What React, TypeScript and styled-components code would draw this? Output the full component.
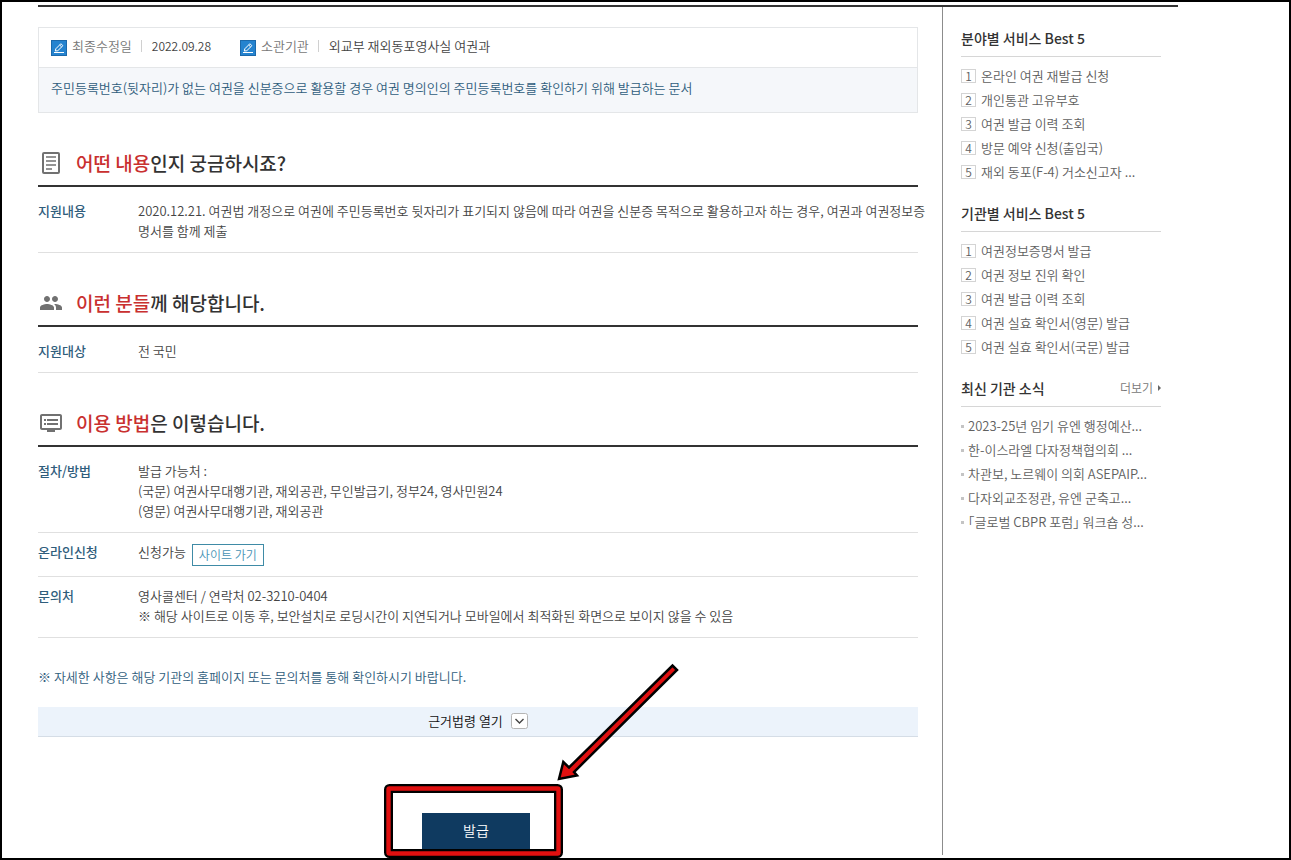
import React from "react";
import styled, { createGlobalStyle } from "styled-components";
import { MdDvr, MdPeople } from "react-icons/md";

const GlobalStyle = createGlobalStyle`
  *, *::before, *::after { box-sizing: border-box; }
  body {
    margin: 0;
    background: #fff;
    color: #444;
    font-family: "Noto Sans CJK KR", "Noto Sans", sans-serif;
    font-size: 13px;
    font-weight: 350;
    line-height: 20px;
  }
  h2, h3, p, ul, ol, dl, dd { margin: 0; padding: 0; }
  ul, ol { list-style: none; }
  a { color: inherit; text-decoration: none; }
  button { font: inherit; cursor: pointer; }
`;

const Page = styled.div`
  min-height: 100vh;
  display: flex;
  flex-direction: column;
  border: 2px solid #000;
  padding: 3px 36px 0;
`;

const Container = styled.div`
  flex: 1;
  display: flex;
  max-width: 1140px;
  border-top: 2px solid #333;
`;

const Main = styled.main`
  flex: 1;
  min-width: 0;
  padding: 20px 24px 9px 0;
`;

const MetaBox = styled.div`
  border: 1px solid #e4e6e8;
`;

const MetaRow = styled.div`
  display: flex;
  align-items: center;
  gap: 29px;
  height: 39px;
  padding: 0 12px;
`;

const MetaItem = styled.div`
  display: flex;
  align-items: center;
  gap: 5px;
`;

const MetaLabel = styled.span`
  padding-bottom: 3px;
  color: #777;
`;

const MetaValue = styled.span`
  margin: 0 0 3px 4px;
  padding-left: 10px;
  line-height: 12px;
  border-left: 1px solid #d0d0d0;
`;

const DateValue = styled(MetaValue)`
  font-size: 12px;
`;

const Summary = styled.p`
  padding: 10px 12px 14px;
  border-top: 1px solid #e4e6e8;
  background: #f5f7fa;
  color: #2f5d7c;
`;

const Section = styled.section`
  margin-top: 36px;
`;

const Heading = styled.h2`
  display: flex;
  align-items: center;
  gap: 13px;
  padding-bottom: 8px;
  border-bottom: 2px solid #333;
  color: #333;
  font-size: 19px;
  font-weight: 500;
  line-height: 28px;

  svg { flex: none; margin-left: 1px; color: #717171; }
`;

const Accent = styled.em`
  color: #c9302f;
  font-style: normal;
`;

const Details = styled.dl`
  padding-top: 5px;
`;

const DetailRow = styled.div`
  display: flex;
  padding: 9px 0 11px;
  border-bottom: 1px solid #e0e0e0;

  dt {
    flex: none;
    width: 100px;
    color: #2f5d7c;
    font-weight: 500;
  }
`;

const WideCell = styled.dd`
  white-space: nowrap;
`;

const ApplyCell = styled.dd`
  display: flex;
  gap: 6px;
`;

const SiteLink = styled.a`
  margin: 2px 0 -1px;
  padding: 0 6px;
  border: 1px solid #3f8ba6;
  color: #4793b4;
  font-size: 12px;
  line-height: 20px;
`;

const Notice = styled.p`
  margin-top: 29px;
  color: #2f5d7c;
`;

const LawToggle = styled.button`
  display: flex;
  align-items: center;
  justify-content: center;
  gap: 8px;
  width: 100%;
  height: 30px;
  margin-top: 20px;
  padding: 0 0 2px;
  border: 0;
  border-bottom: 1px solid #d5dde6;
  background: #ecf3fb;
  color: #111;
`;

const Actions = styled.div`
  display: flex;
  justify-content: center;
  margin-top: 76px;
  padding-right: 4px;
`;

const ActionSpot = styled.div`
  position: relative;
`;

const IssueButton = styled.button`
  display: block;
  width: 108px;
  height: 36px;
  padding: 0 0 2px;
  border: 0;
  background: #0f3a60;
  color: #fff;
  font-size: 14px;
`;

const Highlight = styled.svg`
  position: absolute;
  left: -38px;
  bottom: -9px;
  pointer-events: none;
`;

const Aside = styled.aside`
  flex: none;
  width: 236px;
  margin-bottom: 3px;
  padding: 21px 17px 0 18px;
  border-left: 1px solid #8c8c8c;
`;

const SideSection = styled.section`
  & + & { margin-top: 19px; }
`;

const SideHeader = styled.div`
  display: flex;
  justify-content: space-between;
  padding-bottom: 8px;
  border-bottom: 1px solid #d6d6d6;
`;

const SideTitle = styled.h3`
  color: #333;
  font-size: 14px;
  font-weight: 500;
`;

const MoreLink = styled.a`
  display: flex;
  align-items: center;
  gap: 5px;
  color: #777;
  font-size: 12px;
`;

const SideList = styled.ol`
  padding-top: 7px;
  color: #606060;
  line-height: 24px;

  li {
    display: flex;
    align-items: center;
    gap: 5px;
    white-space: nowrap;
  }
`;

const Rank = styled.span`
  width: 15px;
  height: 14px;
  border: 1px solid #d4d4d4;
  font-size: 12px;
  line-height: 12px;
  text-align: center;
`;

const NewsList = styled(SideList)`
  font-feature-settings: "halt";

  li::before {
    content: "";
    width: 3px;
    height: 3px;
    margin-right: -1px;
    background: #c4c4c4;
  }
`;

const EditIcon = () => (
  <svg width="16" height="16" viewBox="0 0 16 16" fill="none" aria-hidden="true">
    <rect x="0.5" y="0.5" width="15" height="15" fill="#2583cf" stroke="#1c69ab" />
    <path d="M4.3 11 4.8 8.8 9.9 3.7 11.9 5.7 6.8 10.7Z M8.7 5 10.6 6.9" stroke="#fff" />
    <path d="M3 12.5H13" stroke="#fff" />
  </svg>
);

const DocumentIcon = () => (
  <svg width="24" height="24" viewBox="0 0 24 24" fill="none" stroke="currentColor" strokeWidth="2" aria-hidden="true">
    <rect x="4" y="2" width="16" height="20" rx="1" />
    <path d="M7 6H17M7 10H17M7 14H17M7 18H13" strokeWidth="1.7" />
  </svg>
);

const ToggleIcon = () => (
  <svg width="17" height="16" viewBox="0 0 17 16" fill="none" aria-hidden="true">
    <rect x="0.5" y="0.5" width="16" height="15" rx="2" fill="#fff" stroke="#b5b5b5" />
    <path d="M4.5 6 8.5 10 12.5 6" stroke="#444" strokeWidth="1.4" />
  </svg>
);

const services = ["온라인 여권 재발급 신청", "개인통관 고유부호", "여권 발급 이력 조회", "방문 예약 신청(출입국)", "재외 동포(F-4) 거소신고자 ..."];
const agencyServices = ["여권정보증명서 발급", "여권 정보 진위 확인", "여권 발급 이력 조회", "여권 실효 확인서(영문) 발급", "여권 실효 확인서(국문) 발급"];
const news = ["2023-25년 임기 유엔 행정예산...", "한-이스라엘 다자정책협의회 ...", "차관보, 노르웨이 의회 ASEPAIP...", "다자외교조정관, 유엔 군축고...", "「글로벌 CBPR 포럼」 워크숍 성..."];

const RankedServices = ({ title, items }: { title: string; items: string[] }) => (
  <SideSection>
    <SideHeader><SideTitle>{title}</SideTitle></SideHeader>
    <SideList>
      {items.map((item, i) => (
        <li key={item}><Rank>{i + 1}</Rank><a href="#service">{item}</a></li>
      ))}
    </SideList>
  </SideSection>
);

export default function App() {
  return (
    <>
      <GlobalStyle />
      <Page>
        <Container>
          <Main>
            <MetaBox>
              <MetaRow>
                <MetaItem>
                  <EditIcon />
                  <MetaLabel>최종수정일</MetaLabel>
                  <DateValue>2022.09.28</DateValue>
                </MetaItem>
                <MetaItem>
                  <EditIcon />
                  <MetaLabel>소관기관</MetaLabel>
                  <MetaValue>외교부 재외동포영사실 여권과</MetaValue>
                </MetaItem>
              </MetaRow>
              <Summary>주민등록번호(뒷자리)가 없는 여권을 신분증으로 활용할 경우 여권 명의인의 주민등록번호를 확인하기 위해 발급하는 문서</Summary>
            </MetaBox>

            <Section>
              <Heading><DocumentIcon /><span><Accent>어떤 내용</Accent>인지 궁금하시죠?</span></Heading>
              <Details>
                <DetailRow>
                  <dt>지원내용</dt>
                  <WideCell>
                    2020.12.21. 여권법 개정으로 여권에 주민등록번호 뒷자리가 표기되지 않음에 따라 여권을 신분증 목적으로 활용하고자 하는 경우, 여권과 여권정보증<br />
                    명서를 함께 제출
                  </WideCell>
                </DetailRow>
              </Details>
            </Section>

            <Section>
              <Heading><MdPeople size={24} /><span><Accent>이런 분들</Accent>께 해당합니다.</span></Heading>
              <Details>
                <DetailRow><dt>지원대상</dt><dd>전 국민</dd></DetailRow>
              </Details>
            </Section>

            <Section>
              <Heading><MdDvr size={24} /><span><Accent>이용 방법</Accent>은 이렇습니다.</span></Heading>
              <Details>
                <DetailRow>
                  <dt>절차/방법</dt>
                  <dd>
                    발급 가능처 :<br />
                    (국문) 여권사무대행기관, 재외공관, 무인발급기, 정부24, 영사민원24<br />
                    (영문) 여권사무대행기관, 재외공관
                  </dd>
                </DetailRow>
                <DetailRow>
                  <dt>온라인신청</dt>
                  <ApplyCell>신청가능 <SiteLink href="#site">사이트 가기</SiteLink></ApplyCell>
                </DetailRow>
                <DetailRow>
                  <dt>문의처</dt>
                  <dd>
                    영사콜센터 / 연락처 02-3210-0404<br />
                    ※ 해당 사이트로 이동 후, 보안설치로 로딩시간이 지연되거나 모바일에서 최적화된 화면으로 보이지 않을 수 있음
                  </dd>
                </DetailRow>
              </Details>
            </Section>

            <Notice>※ 자세한 사항은 해당 기관의 홈페이지 또는 문의처를 통해 확인하시기 바랍니다.</Notice>
            <LawToggle type="button">근거법령 열기 <ToggleIcon /></LawToggle>

            <Actions>
              <ActionSpot>
                <IssueButton type="button">발급</IssueButton>
                <Highlight width="300" height="196" viewBox="0 0 300 196" fill="none" aria-hidden="true">
                  <rect x="4.5" y="126.5" width="170" height="65" rx="1" stroke="#000" strokeWidth="9" strokeLinejoin="round" />
                  <rect x="4.5" y="126.5" width="170" height="65" rx="1" stroke="#e01010" strokeWidth="4.4" strokeLinejoin="round" />
                  <path d="M175 117 179.3 100 185 105.500 288.500 3.500 293 8 190 110 193 113.500Z" fill="#e01010" stroke="#000" strokeWidth="2.500" />
                </Highlight>
              </ActionSpot>
            </Actions>
          </Main>

          <Aside>
            <RankedServices title="분야별 서비스 Best 5" items={services} />
            <RankedServices title="기관별 서비스 Best 5" items={agencyServices} />
            <SideSection>
              <SideHeader>
                <SideTitle>최신 기관 소식</SideTitle>
                <MoreLink href="#news">
                  더보기
                  <svg width="3" height="6" viewBox="0 0 3 6" aria-hidden="true"><path d="M0 0 3 3 0 6Z" fill="#666" /></svg>
                </MoreLink>
              </SideHeader>
              <NewsList as="ul">
                {news.map((item) => (
                  <li key={item}><a href="#article">{item}</a></li>
                ))}
              </NewsList>
            </SideSection>
          </Aside>
        </Container>
      </Page>
    </>
  );
}
